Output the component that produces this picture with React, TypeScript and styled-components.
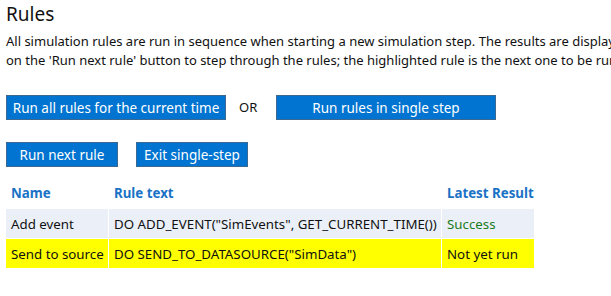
import styled, { createGlobalStyle } from "styled-components"

const GlobalStyle = createGlobalStyle`
  html, body {
    margin: 0;
    padding: 0;
    background: #fff;
    overflow: hidden;
  }
  body {
    font-family: "Noto Sans", "Open Sans", sans-serif;
    font-size: 13px;
    color: #111;
  }
`

const Page = styled.div`
  padding: 0 0 0 6px;
  width: 900px;
`

const Title = styled.h2`
  margin: 0;
  padding-top: 1px;
  font-size: 19px;
  font-weight: 400;
  line-height: 26px;
  color: #111;
`

const Intro = styled.p`
  margin: 5px 0 0;
  line-height: 19px;
  white-space: nowrap;
`

const ButtonRow = styled.div<{ $top: number }>`
  display: flex;
  align-items: center;
  margin-top: ${(p) => p.$top}px;
`

const Button = styled.button<{ $width: number; $gap?: number }>`
  box-sizing: border-box;
  width: ${(p) => p.$width}px;
  height: 25px;
  margin-right: ${(p) => p.$gap ?? 0}px;
  padding: 0;
  border: 1px solid #3d6890;
  background: #0074d0;
  color: #fff;
  font-family: inherit;
  font-size: 13.5px;
  line-height: 22px;
  white-space: nowrap;
  text-align: center;
  cursor: pointer;
`

const Or = styled.span`
  width: 50px;
  padding-left: 13px;
  box-sizing: border-box;
  line-height: 25px;
`

const Table = styled.table`
  margin-top: 10px;
  margin-left: -1px;
  border-collapse: separate;
  border-spacing: 1px;
  table-layout: fixed;
  width: 530px;
  font-size: 13.3px;
`

const Th = styled.th`
  box-sizing: border-box;
  padding: 4px 5px 5px;
  height: 30px;
  text-align: left;
  font-weight: 700;
  white-space: nowrap;
  color: #1a72c6;
`

const Row = styled.tr<{ $highlight?: boolean }>`
  background: ${(p) => (p.$highlight ? "#ffff00" : "#ebf0f8")};
`

const Td = styled.td<{ $tone?: "ok" }>`
  height: 29px;
  box-sizing: border-box;
  padding: 0 5px;
  white-space: nowrap;
  overflow: hidden;
  color: ${(p) => (p.$tone === "ok" ? "#217a21" : "#111")};
`

const columns = [
  { label: "Name", width: 102 },
  { label: "Rule text", width: 332 },
  { label: "Latest Result", width: 92 },
]

const rules = [
  {
    name: "Add event",
    text: 'DO ADD_EVENT("SimEvents", GET_CURRENT_TIME())',
    result: "Success",
    ok: true,
  },
  {
    name: "Send to source",
    text: 'DO SEND_TO_DATASOURCE("SimData")',
    result: "Not yet run",
    highlight: true,
  },
]

const App = () => {
  return (
    <Page>
      <GlobalStyle />
      <Title>Rules</Title>
      <Intro>
        All simulation rules are run in sequence when starting a new simulation step. The results are displayed below. Click
        <br />
        on the 'Run next rule' button to step through the rules; the highlighted rule is the next one to be run.
      </Intro>
      <ButtonRow $top={25}>
        <Button $width={220}>Run all rules for the current time</Button>
        <Or>OR</Or>
        <Button $width={220}>Run rules in single step</Button>
      </ButtonRow>
      <ButtonRow $top={22}>
        <Button $width={112} $gap={18}>
          Run next rule
        </Button>
        <Button $width={112}>Exit single-step</Button>
      </ButtonRow>
      <Table>
        <colgroup>
          {columns.map((c) => (
            <col key={c.label} width={c.width} />
          ))}
        </colgroup>
        <thead>
          <tr>
            {columns.map((c) => (
              <Th key={c.label}>{c.label}</Th>
            ))}
          </tr>
        </thead>
        <tbody>
          {rules.map((r) => (
            <Row key={r.name} $highlight={r.highlight}>
              <Td>{r.name}</Td>
              <Td>{r.text}</Td>
              <Td $tone={r.ok ? "ok" : undefined}>{r.result}</Td>
            </Row>
          ))}
        </tbody>
      </Table>
    </Page>
  )
}

export default App
